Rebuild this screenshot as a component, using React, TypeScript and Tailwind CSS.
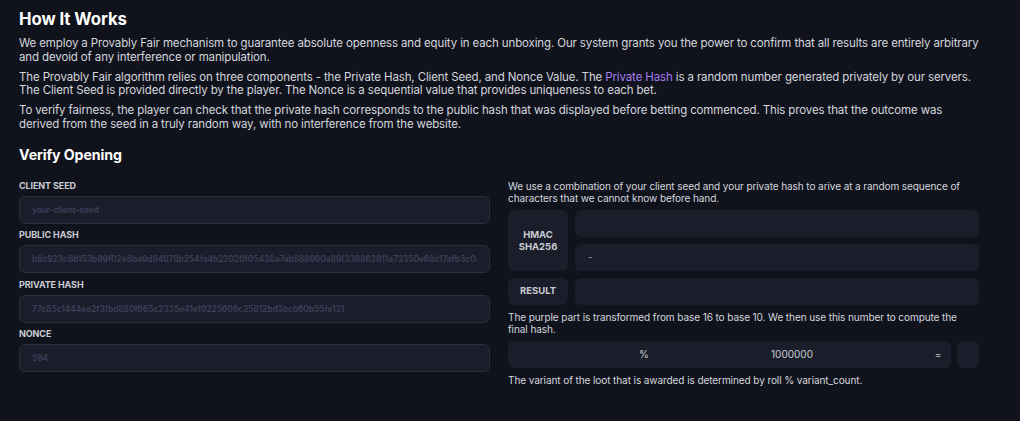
import React from "react";

const fields = [
	{ label: "Client Seed", value: "your-client-seed" },
	{
		label: "Public Hash",
		value: "b8c923c8b153b99f02e8ba9d94078b254fa4b22020f05438a7ab888960a89f336862811a73350e68c17afb3c0a9b",
	},
	{ label: "Private Hash", value: "77c85c1444ee2f3fbd880f665c2335e41ef0225606c25812bd3bcb60b55fe131" },
	{ label: "Nonce", value: "594" },
];

function Field({ label, value }: { label: string; value: string }) {
	return (
		<div className="flex flex-col">
			<span className="mb-[5px] text-[9px] font-bold uppercase leading-[11px] tracking-[-0.1px] text-[#c9ccd4]">
				{label}
			</span>
			<input
				readOnly
				placeholder={value}
				className="h-[28px] w-full rounded-[6px] border border-[#2a2e3f] bg-[#1b1e2a] px-[12px] text-[8.4px] font-semibold tracking-[-0.05px] text-[#3b405a] outline-none placeholder:text-[#3b405a]"
			/>
		</div>
	);
}

export default function App() {
	return (
		<div className="min-h-screen bg-[#11131c] px-[19px] pt-[8px] font-['Inter','Noto_Sans',sans-serif] text-[#d3d6dd]">
			<div className="w-[960px]">
				<h2 className="text-[16.8px] font-bold leading-[22px] tracking-[-0.1px] text-white">How It Works</h2>
				<div className="mt-[7px] flex flex-col gap-[6.5px] text-[11.5px] leading-[13.5px] tracking-[-0.13px]">
					<p>
						We employ a Provably Fair mechanism to guarantee absolute openness and equity in each unboxing. Our
						system grants you the power to confirm that all results are entirely arbitrary and devoid of any
						interference or manipulation.
					</p>
					<p>
						The Provably Fair algorithm relies on three components - the Private Hash, Client Seed, and Nonce
						Value. The <span className="text-[#a57ef0]">Private Hash</span> is a random number generated privately
						by our servers. The Client Seed is provided directly by the player. The Nonce is a sequential value
						that provides uniqueness to each bet.
					</p>
					<p>
						To verify fairness, the player can check that the private hash corresponds to the public hash that was
						displayed before betting commenced. This proves that the outcome was derived from the seed in a truly
						random way, with no interference from the website.
					</p>
				</div>

				<h3 className="mt-[14px] text-[14.2px] font-bold leading-[20px] tracking-[-0.1px] text-white">
					Verify Opening
				</h3>

				<div className="mt-[14.5px] grid grid-cols-2 gap-[18px]">
					{/* 입력 필드 */}
					<div className="flex flex-col gap-[5.5px]">
						{fields.map((f) => (
							<Field key={f.label} label={f.label} value={f.value} />
						))}
					</div>

					{/* 계산 과정 */}
					<div className="flex flex-col pt-[0.5px]">
						<p className="text-[10.05px] leading-[12px] tracking-[-0.1px]">
							We use a combination of your client seed and your private hash to arive at a random sequence of
							characters that we cannot know before hand.
						</p>
						<div className="mt-[6px] flex gap-[7px]">
							<div className="flex w-[60px] items-center justify-center rounded-[6px] bg-[#1b1e2a] text-center text-[9.5px] font-bold leading-[12px] text-[#c9ccd4]">
								HMAC
								<br />
								SHA256
							</div>
							<div className="flex flex-1 flex-col gap-[7px]">
								<div className="h-[27px] rounded-[6px] bg-[#1b1e2a]" />
								<div className="flex h-[27px] items-center rounded-[6px] bg-[#1b1e2a] px-[13px] text-[10px] text-[#9ca0ad]">
									-
								</div>
							</div>
						</div>
						<div className="mt-[7px] flex gap-[7px]">
							<div className="flex h-[27px] w-[60px] items-center justify-center rounded-[6px] bg-[#1b1e2a] text-[9.5px] font-bold text-[#c9ccd4]">
								RESULT
							</div>
							<div className="h-[27px] flex-1 rounded-[6px] bg-[#1b1e2a]" />
						</div>
						<p className="mt-[6px] w-[460px] text-[10.05px] leading-[12px] tracking-[-0.1px]">
							The purple part is transformed from base 16 to base 10. We then use this number to compute the final
							hash.
						</p>
						<div className="mt-[6px] flex gap-[6px]">
							<div className="flex h-[27px] flex-1 items-center rounded-[6px] bg-[#1b1e2a] text-[10px] text-[#c9ccd4]">
								<div className="w-[128px]" />
								<span className="w-[16px] text-center">%</span>
								<span className="w-[280px] text-center">1000000</span>
								<span className="w-[12px] text-center">=</span>
							</div>
							<div className="h-[27px] w-[22px] rounded-[6px] bg-[#1b1e2a]" />
						</div>
						<p className="mt-[6px] text-[10.05px] leading-[12px] tracking-[-0.1px]">
							The variant of the loot that is awarded is determined by roll % variant_count.
						</p>
					</div>
				</div>
			</div>
		</div>
	);
}
